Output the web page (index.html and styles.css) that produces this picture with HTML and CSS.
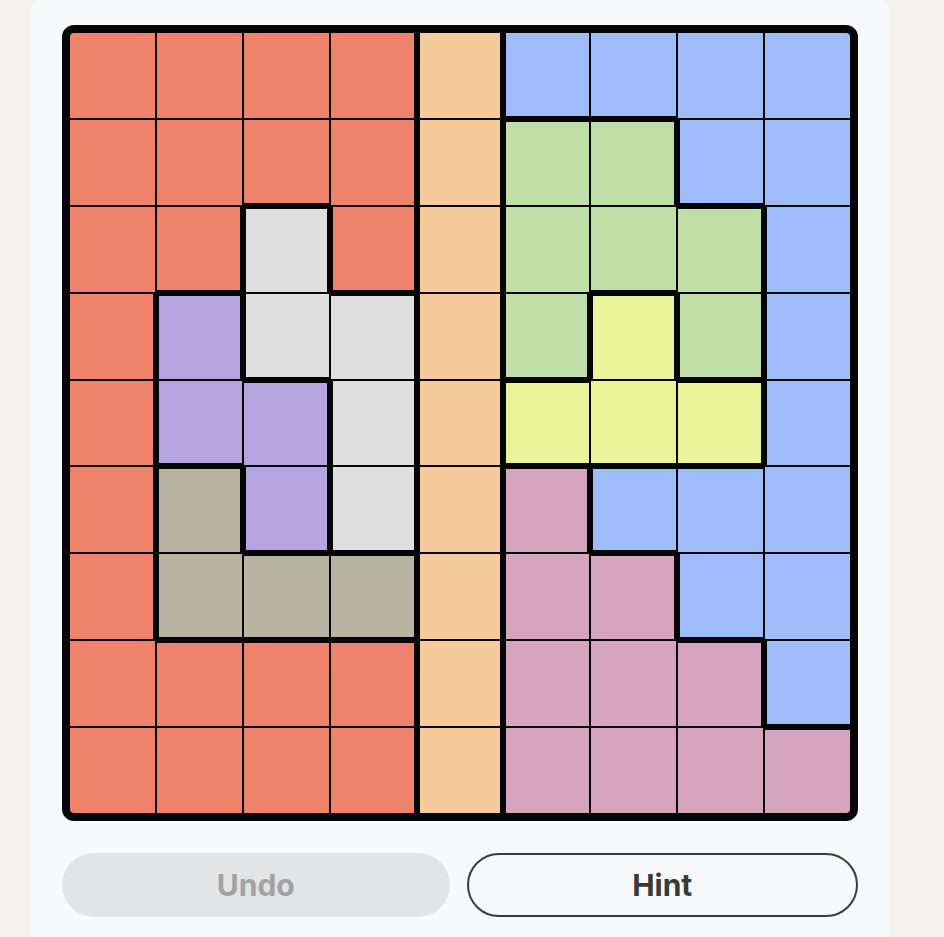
FILE: index.html
```html
<!DOCTYPE html>
<html lang="en">
<head>
    <meta charset="UTF-8">
    <meta name="viewport" content="width=device-width, initial-scale=1.0">
    <title>Regions</title>
    <link rel="stylesheet" href="styles.css">
</head>
<body>

<div class="card">
    <div class="board" id="board"></div>

    <div class="actions">
        <button type="button" class="btn btn-undo" disabled>Undo</button>
        <button type="button" class="btn btn-hint">Hint</button>
    </div>
</div>

<script>
    // one letter per cell, same letter = same region
    var layout = [
        "RRRROBBBB",
        "RRRROGGBB",
        "RRWROGGGB",
        "RPWWOGYGB",
        "RPPWOYYYB",
        "RTPWOKBBB",
        "RTTTOKKBB",
        "RRRROKKKB",
        "RRRROKKKK"
    ];

    var board = document.getElementById("board");

    for (var r = 0; r < 9; r++) {
        for (var c = 0; c < 9; c++) {
            var id = layout[r][c];
            var cell = document.createElement("div");
            cell.className = "cell reg-" + id;

            // heavier line wherever the neighbour belongs to another region
            if (r > 0 && layout[r - 1][c] !== id) cell.classList.add("edge-t");
            if (r < 8 && layout[r + 1][c] !== id) cell.classList.add("edge-b");
            if (c > 0 && layout[r][c - 1] !== id) cell.classList.add("edge-l");
            if (c < 8 && layout[r][c + 1] !== id) cell.classList.add("edge-r");

            board.appendChild(cell);
        }
    }
</script>

</body>
</html>
```

FILE: styles.css
```css
body {
    margin: 0;
    background-color: #f2f1ee;
    font-family: Inter, "Noto Sans", sans-serif;
}
.card {
    width: 796px;
    margin-left: 30px;
    padding: 25px 32px 40px;
    background-color: #f8f9fb;
    border-radius: 12px;
}
.board {
    display: grid;
    grid-template-columns: repeat(9, 1fr);
    grid-template-rows: repeat(9, 1fr);
    gap: 2px;
    width: 780px;
    height: 780px;
    border: 8px solid #050505;
    border-radius: 12px;
    background-color: #050505;
    overflow: hidden;
}
.cell {
    box-sizing: border-box;
    border: 0 solid #050505;
}
.edge-t { border-top-width: 2px; }
.edge-b { border-bottom-width: 2px; }
.edge-l { border-left-width: 2px; }
.edge-r { border-right-width: 2px; }

.reg-R { background-color: #ee826a; }
.reg-O { background-color: #f6cb9c; }
.reg-B { background-color: #9ebcfa; }
.reg-G { background-color: #bfdea8; }
.reg-W { background-color: #dfdfdf; }
.reg-P { background-color: #b6a4e0; }
.reg-T { background-color: #b8b4a2; }
.reg-Y { background-color: #e8f39a; }
.reg-K { background-color: #d6a4bf; }

.actions {
    display: flex;
    gap: 17px;
    margin-top: 32px;
}
.btn {
    flex: 1;
    height: 64px;
    border-radius: 32px;
    font-family: Inter, "Noto Sans", sans-serif;
    font-size: 30px;
    font-weight: 700;
    cursor: pointer;
}
.btn-undo {
    border: none;
    background-color: #e3e4e6;
    color: #a2a2a4;
    cursor: default;
}
.btn-hint {
    border: 2px solid #3c3c3e;
    background-color: #f8f9fb;
    color: #3a3a3c;
}
```
